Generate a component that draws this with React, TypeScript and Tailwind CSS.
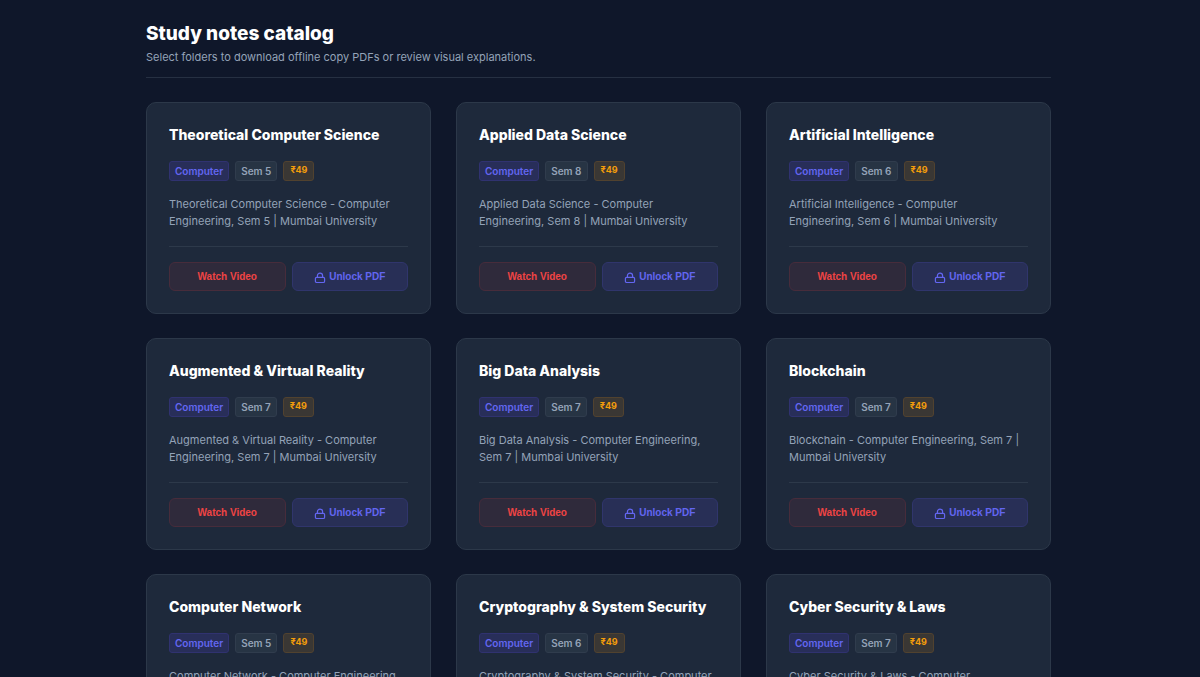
import React from "react";

type Note = {
  title: string;
  sem: number;
};

const notes: Note[] = [
  { title: "Theoretical Computer Science", sem: 5 },
  { title: "Applied Data Science", sem: 8 },
  { title: "Artificial Intelligence", sem: 6 },
  { title: "Augmented & Virtual Reality", sem: 7 },
  { title: "Big Data Analysis", sem: 7 },
  { title: "Blockchain", sem: 7 },
  { title: "Computer Network", sem: 5 },
  { title: "Cryptography & System Security", sem: 6 },
  { title: "Cyber Security & Laws", sem: 7 },
];

function LockIcon() {
  return (
    <svg viewBox="0 0 12 12" className="mt-[2px] h-3 w-3 shrink-0" fill="none" stroke="currentColor" strokeWidth="1.2" aria-hidden="true">
      <rect x="1.4" y="5.3" width="9.2" height="5.2" rx="1.3" />
      <path d="M3.4 5.3V3.7a2.6 2.6 0 0 1 5.2 0v1.6" />
    </svg>
  );
}

function NoteCard({ note }: { note: Note }) {
  return (
    <article className="flex flex-col rounded-[10px] border border-[#2c3849] bg-[#1e293b] px-[22px] pt-6 pb-[22px]">
      <h2 className="text-[14px] leading-4 font-extrabold text-white">{note.title}</h2>

      <div className="mt-[18px] flex gap-[6px] text-[10px] leading-[14px] font-semibold">
        <span className="rounded-[3px] border border-[#303270] bg-[#282e59] px-[5px] pt-[2px] pb-[2px] text-[#6366f1]">Computer</span>
        <span className="rounded-[3px] border border-[#303c4d] bg-[#273444] px-[5px] pt-[2px] pb-[2px] text-[#94a3b8]">Sem {note.sem}</span>
        <span className="rounded-[3px] border border-[#51422f] bg-[#3a3734] px-[6px] pt-px pb-[3px] text-[9px] font-bold text-[#f59e0b]">₹49</span>
      </div>

      <p className="mt-[15px] pr-1 text-[11px] leading-[17px] text-[#94a3b8]">
        {note.title} - Computer Engineering, Sem {note.sem} | Mumbai University
      </p>

      <div className="mt-4 grid grid-cols-2 gap-[6px] border-t border-[#2d394a] pt-[15px] font-['Liberation_Sans',Arial,sans-serif] text-[10px] leading-[15px] font-bold">
        <button type="button" className="rounded-md border border-[#472c3b] bg-[#2f2a3b] py-[6px] text-[#ef4444]">
          Watch Video
        </button>
        <button type="button" className="flex items-center justify-center gap-[3px] rounded-md border border-[#30356c] bg-[#282f56] py-[6px] text-[#6366f1]">
          <LockIcon />
          Unlock PDF
        </button>
      </div>
    </article>
  );
}

export default function App() {
  return (
    <div className="min-h-screen bg-[#0f172a] pt-[23px] pr-[27px] pb-10 pl-6 font-[Inter,sans-serif]">
      <main className="mx-auto max-w-[905px]">
        <header className="border-b border-[#263042] pb-[11px]">
          <h1 className="text-[19px] leading-[22px] font-extrabold text-white">Study notes catalog</h1>
          <p className="mt-1 text-[11px] leading-[17px] text-[#94a3b8]">
            Select folders to download offline copy PDFs or review visual explanations.
          </p>
        </header>

        <section className="mt-6 grid grid-cols-1 gap-x-[25px] gap-y-6 sm:grid-cols-2 md:grid-cols-3">
          {notes.map((note) => (
            <NoteCard key={note.title} note={note} />
          ))}
        </section>
      </main>
    </div>
  );
}
